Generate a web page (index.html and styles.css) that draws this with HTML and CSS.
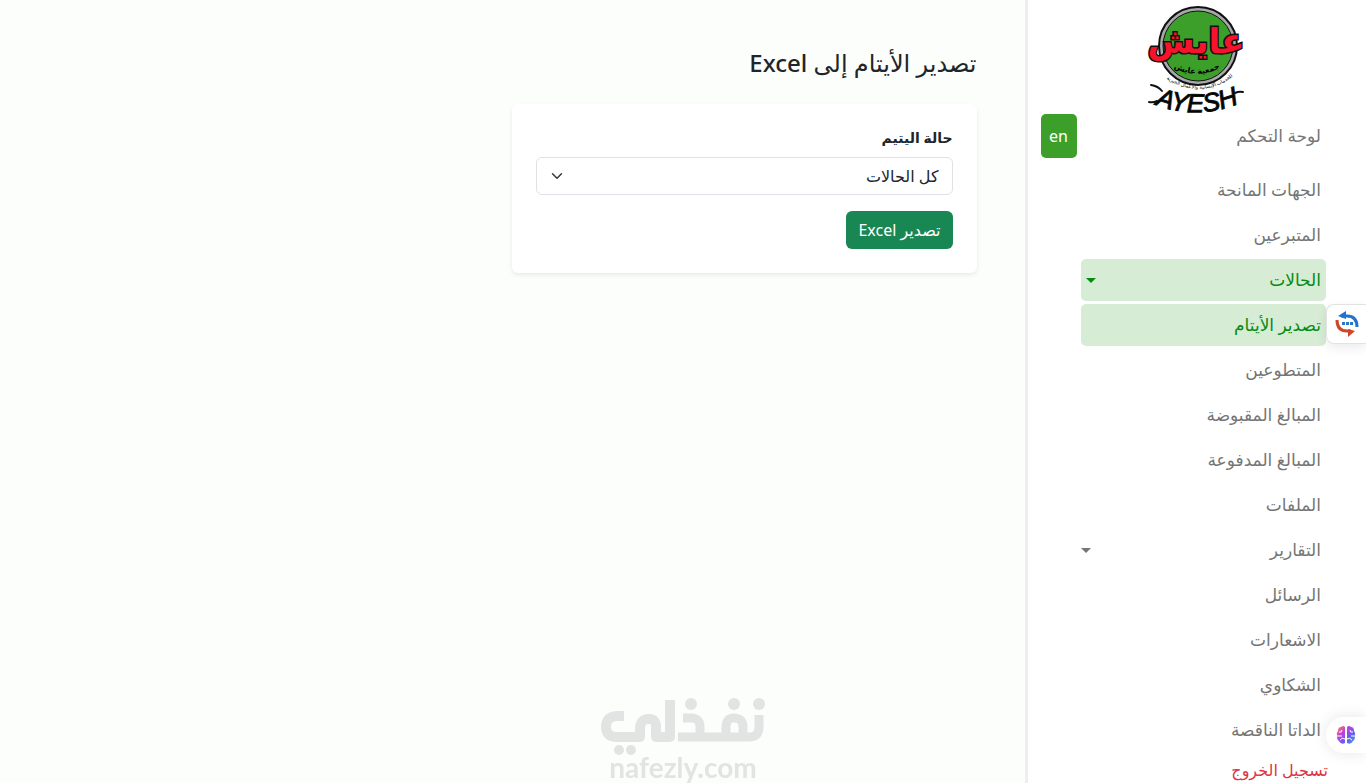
FILE: index.html
```html
<!DOCTYPE html>
<html lang="ar" dir="rtl">
<head>
    <meta charset="UTF-8">
    <meta name="viewport" content="width=device-width, initial-scale=1.0">
    <title>تصدير الأيتام</title>
    <link rel="stylesheet" href="styles.css">
</head>
<body>
    <div class="layout">
        <aside class="sidebar">
            <svg class="logo" viewBox="0 0 100 108" role="img" aria-label="AYESH">
                <defs>
                    <path id="arc-inner" d="M24 61 Q50 77 76 61"/>
                    <path id="arc-outer" d="M10 66 Q26 82 50 84 Q78 84 94 62"/>
                    <path id="arc-name" d="M2 97 Q50 118 98 96"/>
                </defs>
                <circle cx="51" cy="41" r="39" fill="#a9a9ad" stroke="#111" stroke-width="2"/>
                <circle cx="51" cy="41" r="35" fill="#3b9f2a" stroke="#111" stroke-width="1"/>
                <text class="logo-main" x="49" y="48">عايش</text>
                <text class="logo-sub"><textPath href="#arc-inner" startOffset="50%">جمعية عايش</textPath></text>
                <text class="logo-tiny"><textPath href="#arc-outer" startOffset="50%">للخدمات الإنسانية والأعمال الخيرية</textPath></text>
                <text class="logo-name" direction="ltr"><textPath href="#arc-name" startOffset="50%">AYESH</textPath></text>
                <path d="M4 80 Q11 81 15 86 M2 97 Q6 98 10 96 M88 88 Q92 86 96 87" fill="none" stroke="#111" stroke-width="2" stroke-linecap="round"/>
            </svg>
            <div class="sidebar-top">
                <a class="nav-link" href="#">لوحة التحكم</a>
                <button class="lang-btn" type="button">en</button>
            </div>
            <ul class="nav">
                <li><a class="nav-link" href="#">الجهات المانحة</a></li>
                <li><a class="nav-link" href="#">المتبرعين</a></li>
                <li><a class="nav-link active caret" href="#">الحالات</a></li>
                <li><a class="nav-link active" href="#">تصدير الأيتام</a></li>
                <li><a class="nav-link" href="#">المتطوعين</a></li>
                <li><a class="nav-link" href="#">المبالغ المقبوضة</a></li>
                <li><a class="nav-link" href="#">المبالغ المدفوعة</a></li>
                <li><a class="nav-link" href="#">الملفات</a></li>
                <li><a class="nav-link caret" href="#">التقارير</a></li>
                <li><a class="nav-link" href="#">الرسائل</a></li>
                <li><a class="nav-link" href="#">الاشعارات</a></li>
                <li><a class="nav-link" href="#">الشكاوي</a></li>
                <li><a class="nav-link" href="#">الداتا الناقصة</a></li>
            </ul>
            <a class="logout" href="#">تسجيل الخروج</a>
        </aside>

        <main class="content">
            <h4 class="title">تصدير الأيتام إلى Excel</h4>
            <form class="card">
                <label class="form-label" for="status">حالة اليتيم</label>
                <select class="form-select" id="status">
                    <option>كل الحالات</option>
                </select>
                <button class="btn-export" type="button">تصدير Excel</button>
            </form>
        </main>
    </div>

    <div class="watermark">
        <svg class="watermark-logo" viewBox="0 0 166 58" aria-hidden="true">
            <g fill="none" stroke="#e2e4e3" stroke-width="9" stroke-linejoin="round">
                <path d="M24 18 H18 Q6 18 6 29 Q6 39 17 39 H40 V31 Q40 21 49 21 Q56 21 56 29 V39 H70 V2" stroke-width="10"/>
                <path d="M83 20 H91 Q100 20 100 29 V39 M78 39 H143 V29 Q143 20 134 20 Q126 20 126 29 V39"/>
                <path d="M143 39 H149 Q159 39 159 29 V17"/>
            </g>
            <g fill="#e2e4e3">
                <circle cx="19" cy="52" r="5"/>
                <circle cx="31" cy="52" r="5"/>
                <circle cx="91" cy="6" r="6"/>
                <circle cx="134" cy="6" r="6"/>
                <circle cx="159" cy="6" r="6"/>
            </g>
        </svg>
        <span class="watermark-text" dir="ltr">nafezly.com</span>
    </div>

    <button class="float-btn float-chat" type="button" aria-label="chat">
        <svg width="26" height="28" viewBox="0 0 26 28">
            <path d="M7 6 H13 Q23 6 23 17" fill="none" stroke="#1f74cc" stroke-width="3"/>
            <path d="M4 6 L12 1 V9 Z" fill="#1f74cc"/>
            <path d="M3 10 Q3 21 13 21 H17" fill="none" stroke="#cf4526" stroke-width="3"/>
            <path d="M21 21 L14 27 V19 Z" fill="#cf4526"/>
            <path d="M8 12 h3 v3 h-3z M12 12 h3 v3 h-3z M16 12 h3 v3 h-3z" fill="#2a78c8"/>
        </svg>
    </button>
    <button class="float-btn float-brain" type="button" aria-label="assistant">
        <svg width="20" height="20" viewBox="0 0 20 20">
            <defs>
                <linearGradient id="brain" x1="0" y1="0" x2="1" y2="1">
                    <stop offset="0" stop-color="#ff8a4c"/>
                    <stop offset="0.35" stop-color="#c03fdc"/>
                    <stop offset="0.65" stop-color="#6a5cf0"/>
                    <stop offset="1" stop-color="#38a5f5"/>
                </linearGradient>
            </defs>
            <path d="M9 2 Q7 0 5 2 Q2 2 2 6 Q0 8 1 11 Q1 15 3 16 Q5 20 9 18 Z M11 2 Q13 0 15 2 Q18 2 18 6 Q20 8 19 11 Q19 15 17 16 Q15 20 11 18 Z" fill="url(#brain)"/>
            <path d="M3 7 Q6 8 6 5 M1 11 H6 M4 15 Q6 12 9 14 M17 7 Q14 8 14 5 M19 11 H15 M16 15 Q14 12 11 14" fill="none" stroke="#fff" stroke-width="1"/>
        </svg>
    </button>
</body>
</html>
```
FILE: styles.css
```css
* {
    box-sizing: border-box;
}
body {
    margin: 0;
    font-family: "Noto Sans", "DejaVu Sans", sans-serif;
    font-size: 16px;
    line-height: 24px;
    color: #212529;
    background-color: #fcfefc;
}
button,
select {
    font-family: inherit;
    font-size: 16px;
    line-height: 24px;
}
.layout {
    display: flex;
    height: 100vh;
    overflow: hidden;
}

/* sidebar */
.sidebar {
    flex: 0 0 25%;
    display: flex;
    flex-direction: column;
    padding-top: 5px;
    background-color: #fff;
    border-left: 3px solid #eee;
}
.logo {
    flex: none;
    align-self: center;
    width: 100px;
    height: 108px;
    overflow: visible;
}
.logo-main {
    font-size: 34px;
    font-weight: bold;
    text-anchor: middle;
    fill: #f5142c;
    stroke: #111;
    stroke-width: 3px;
    paint-order: stroke;
}
.logo-sub {
    font-size: 8px;
    font-weight: bold;
    text-anchor: middle;
}
.logo-tiny {
    font-size: 5px;
    text-anchor: middle;
}
.logo-name {
    font-family: "Liberation Sans", sans-serif;
    font-size: 26px;
    font-style: italic;
    text-anchor: middle;
    stroke: #111;
    stroke-width: 1px;
}
.sidebar-top {
    display: flex;
    justify-content: space-between;
    align-items: center;
    margin: 1px 40px 11px 13px;
}
.lang-btn {
    width: 36px;
    height: 44px;
    padding: 0;
    border: none;
    border-radius: 5px;
    color: #fff;
    background-color: #3b9f2a;
}
.nav {
    display: flex;
    flex-direction: column;
    gap: 3px;
    margin: 0 40px 0 53px;
    padding: 0;
    list-style: none;
}
.nav-link {
    display: flex;
    justify-content: space-between;
    align-items: center;
    height: 42px;
    padding-right: 5px;
    border-radius: 5px;
    font-size: 17px;
    color: #757575;
    text-decoration: none;
}
.nav-link.active {
    padding-left: 5px;
    color: #078a12;
    background-color: #d7ecd4;
}
.caret::after {
    content: "";
    border-top: 5px solid;
    border-right: 5px solid transparent;
    border-left: 5px solid transparent;
}
.logout {
    margin-right: 38px;
    font-size: 16px;
    line-height: 38px;
    color: #dc3545;
    text-decoration: none;
}

/* page */
.content {
    flex: 1;
    padding: 48px;
}
.title {
    margin: 0 0 26px;
    font-size: 24px;
    font-weight: 500;
    line-height: 30px;
}
.card {
    display: flex;
    flex-direction: column;
    align-items: flex-start;
    width: 50%;
    padding: 24px;
    border-radius: 6px;
    background-color: #fff;
    box-shadow: 0 2px 4px rgba(0,0,0,0.08);
}
.form-label {
    margin-bottom: 9px;
    font-size: 14px;
    font-weight: 600;
    line-height: 20px;
}
.form-select {
    width: 100%;
    height: 38px;
    margin-bottom: 16px;
    padding: 0 13px;
    border: 1px solid #dee2e6;
    border-radius: 6px;
    color: #212529;
    background: #fff url("data:image/svg+xml,%3Csvg xmlns='http://www.w3.org/2000/svg' viewBox='0 0 16 16'%3E%3Cpath fill='none' stroke='%23343a40' stroke-linecap='round' stroke-linejoin='round' stroke-width='2' d='m2 5 6 6 6-6'/%3E%3C/svg%3E") no-repeat left 14px center / 12px 12px;
    appearance: none;
}
.btn-export {
    height: 38px;
    padding: 0 12px;
    border: none;
    border-radius: 6px;
    color: #fff;
    background-color: #198754;
}

/* overlays */
.watermark {
    position: fixed;
    bottom: 0;
    left: 50%;
    display: flex;
    flex-direction: column;
    align-items: center;
    transform: translateX(-50%);
    pointer-events: none;
}
.watermark-logo {
    width: 166px;
    height: 58px;
}
.watermark-text {
    padding-bottom: 4px;
    font-family: "Lato", sans-serif;
    font-size: 28px;
    font-weight: bold;
    line-height: 23px;
    color: #e2e4e3;
}
.float-btn {
    position: fixed;
    right: 0;
    display: flex;
    align-items: center;
    justify-content: center;
    width: 40px;
    padding: 0;
    border: none;
    background-color: #fff;
}
.float-chat {
    top: 304px;
    height: 40px;
    border: 1px solid #e2e2e2;
    border-right: none;
    border-radius: 8px 0 0 8px;
    box-shadow: 0 4px 12px rgba(0,0,0,0.08);
}
.float-brain {
    bottom: 30px;
    height: 36px;
    border-radius: 18px 0 0 18px;
    box-shadow: 0 0 16px rgba(0,0,0,0.1);
}
```
